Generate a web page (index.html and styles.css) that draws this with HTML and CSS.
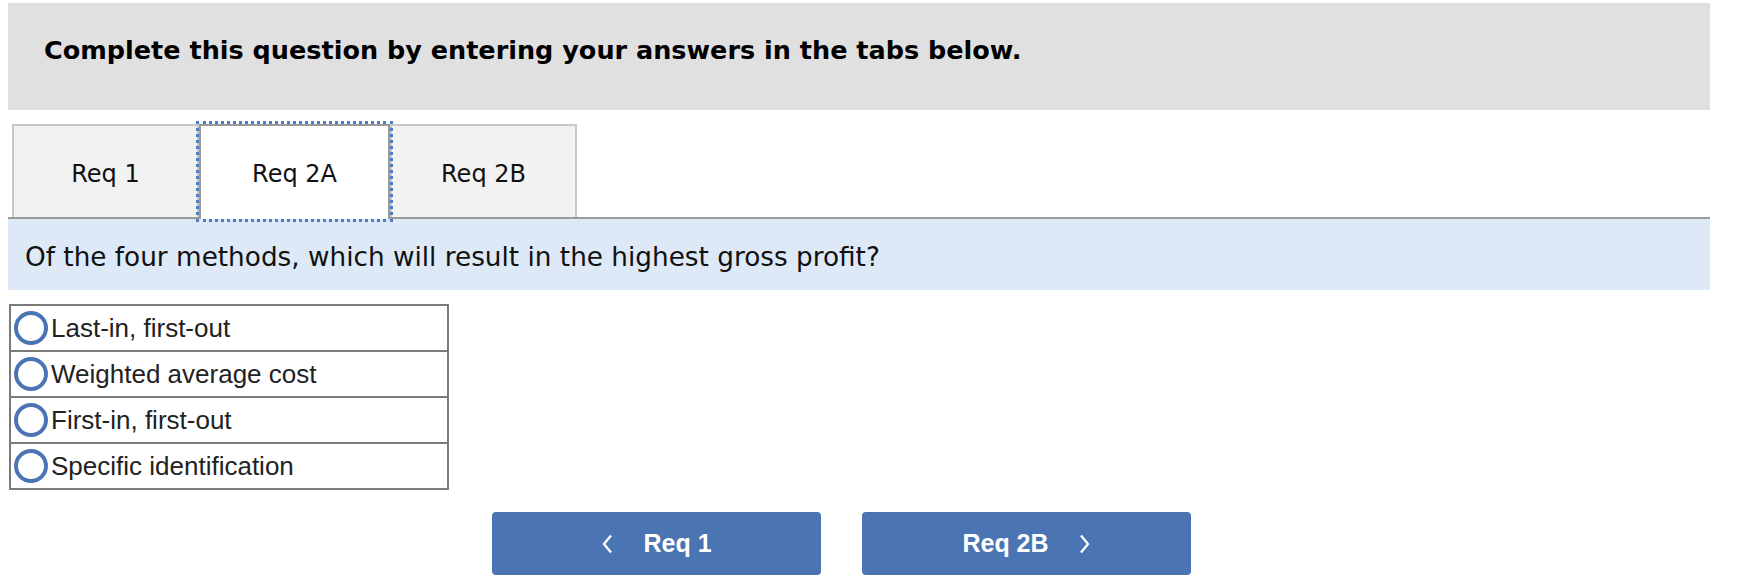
FILE: index.html
```html
<!DOCTYPE html>
<html>
<head>
<meta charset="utf-8">
<link rel="stylesheet" href="styles.css">
</head>
<body>
<div class="page">
  <div class="banner">
    <h2 class="banner-title">Complete this question by entering your answers in the tabs below.</h2>
  </div>
  <div class="tabs">
    <div class="tab">Req 1</div>
    <div class="tab tab-active">Req 2A</div>
    <div class="tab">Req 2B</div>
  </div>
  <div class="question">Of the four methods, which will result in the highest gross profit?</div>
  <div class="options">
    <div class="option"><span class="radio"></span><span class="option-label">Last-in, first-out</span></div>
    <div class="option"><span class="radio"></span><span class="option-label">Weighted average cost</span></div>
    <div class="option"><span class="radio"></span><span class="option-label">First-in, first-out</span></div>
    <div class="option"><span class="radio"></span><span class="option-label">Specific identification</span></div>
  </div>
  <div class="nav">
    <button class="nav-btn">
      <svg class="chev" width="12" height="20" viewBox="0 0 12 20"><polyline points="10,1.5 3,10 10,18.5" fill="none" stroke="#fff" stroke-width="2.3"/></svg>
      <span>Req 1</span>
    </button>
    <button class="nav-btn">
      <span>Req 2B</span>
      <svg class="chev" width="12" height="20" viewBox="0 0 12 20"><polyline points="2,1.5 9,10 2,18.5" fill="none" stroke="#fff" stroke-width="2.3"/></svg>
    </button>
  </div>
</div>
</body>
</html>
```

FILE: styles.css
```css
html, body {
  margin: 0;
  padding: 0;
  background: #ffffff;
}
.page {
  padding: 3px 28px 0 8px;
  font-family: "DejaVu Sans", Verdana, sans-serif;
  color: #111;
}
.banner {
  background: #e0e0e0;
  height: 107px;
  display: flex;
  align-items: flex-start;
}
.banner-title {
  margin: 32px 0 0 36px;
  font-size: 25.5px;
  font-weight: bold;
  color: #000;
}
.tabs {
  margin-top: 14px;
  padding-left: 4px;
  display: flex;
  border-bottom: 2px solid #9a9a9a;
  height: 93px;
}
.tab {
  width: 187px;
  box-sizing: border-box;
  background: #f2f2f2;
  border: 2px solid #c8c8c8;
  border-bottom: none;
  display: flex;
  align-items: center;
  justify-content: center;
  padding-top: 4px;
  font-size: 24px;
  color: #111;
}
.tab-active {
  width: 191px;
  background: #fff;
  border-color: #9a9a9a;
  outline: 3px dotted #4a7cc8;
  outline-offset: 0;
  height: 95px;
  padding-top: 2px;
  position: relative;
  z-index: 1;
}
.question {
  background: #dde9f7;
  height: 71px;
  display: flex;
  align-items: center;
  padding-left: 17px;
  padding-top: 5px;
  box-sizing: border-box;
  font-size: 26.3px;
  color: #111;
}
.options {
  margin: 14px 0 0 1px;
  width: 440px;
  border: 2px solid #7a7a7a;
  box-sizing: border-box;
  font-family: "Liberation Sans", Arial, sans-serif;
}
.option {
  height: 44px;
  display: flex;
  align-items: center;
  padding-left: 3px;
  font-size: 26px;
  color: #222;
}
.option + .option {
  border-top: 2px solid #7a7a7a;
}
.radio {
  width: 26px;
  height: 26px;
  border: 4px solid #4a74b4;
  border-radius: 50%;
  margin-right: 3px;
  flex: none;
}
.nav {
  margin-top: 22px;
  padding-left: 484px;
  display: flex;
  gap: 41px;
}
.nav-btn {
  width: 329px;
  height: 63px;
  background: #4a74b2;
  border: none;
  border-radius: 4px;
  color: #fff;
  font-family: "Liberation Sans", Arial, sans-serif;
  font-weight: bold;
  font-size: 25px;
  display: flex;
  align-items: center;
  justify-content: center;
  gap: 30px;
  padding: 0;
}
.chev {
  display: block;
}
```
